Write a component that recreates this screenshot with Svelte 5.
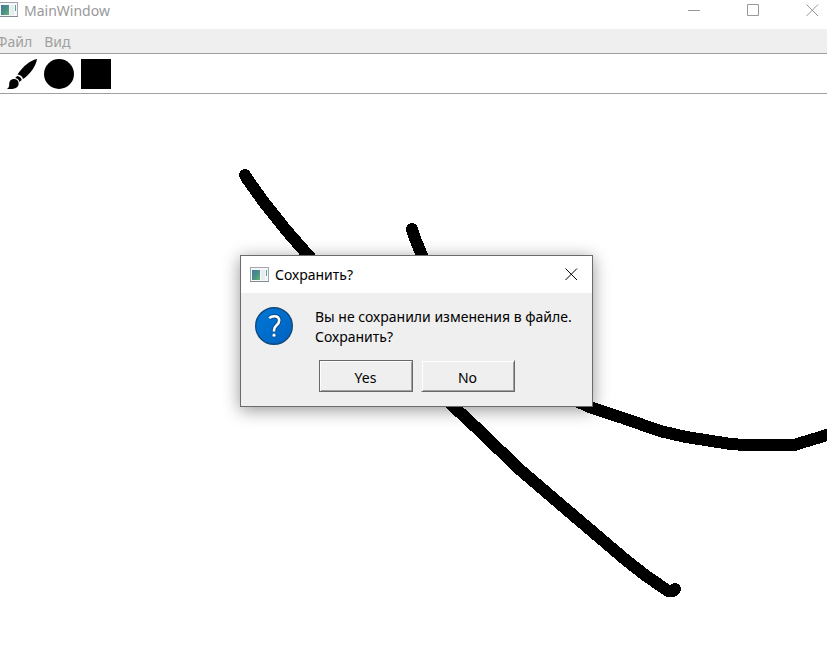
<script>
  let open = $state(true);
  const menus = ['Файл', 'Вид'];
  const strokes = [
    'M245 81 L248 86 L263 107 L286 136 L314 168 L362 225 L410 271 L453 312 L482 339 L518 374 L560 410 L627 467 L645 481 L668 497 H673 L675 495',
    'M412 135 L416 147 L424 166 L450 220 L510 275 L583 310 L592 314 L623 324 L660 337 L686 343 L731 350 L745 351 H794 L827 341 L860 331'
  ];
</script>

{#snippet appIcon()}
  <svg class="app-icon" viewBox="0 0 19 16" aria-hidden="true">
    <defs>
      <linearGradient id="pane" x1="0" y1="0" x2="1" y2="1">
        <stop offset="0" stop-color="#4676a0" />
        <stop offset=".55" stop-color="#4a9185" />
        <stop offset="1" stop-color="#62b56a" />
      </linearGradient>
    </defs>
    <rect x=".5" y=".5" width="18" height="14" fill="#f5f7f9" stroke="#a3a8b0" />
    <path d="M0 14.5H19" stroke="#858b93" />
    <rect x="2" y="3" width="8" height="10" fill="url(#pane)" />
    <rect x="11" y="3" width="4" height="10" fill="#e6ecf1" />
    <path d="M16.5 3V9" stroke="#5aa58b" />
  </svg>
{/snippet}

<div class="window">
  <header class="titlebar">
    {@render appIcon()}
    <h1>MainWindow</h1>
    <div class="controls">
      <button aria-label="Minimize"><svg viewBox="0 0 13 13"><path d="M0 6.5H12" /></svg></button>
      <button aria-label="Maximize"><svg viewBox="0 0 13 13"><path d="M.5 .5H11.5V11.5H.5Z" /></svg></button>
      <button aria-label="Close"><svg viewBox="0 0 13 13"><path d="M.5 .5L12 12M12 .5L.5 12" /></svg></button>
    </div>
  </header>

  <nav class="menubar">
    {#each menus as menu}
      <button>{menu}</button>
    {/each}
  </nav>

  <div class="toolbar">
    <button aria-label="Brush">
      <svg viewBox="0 0 30 30">
        <path d="M30 0C24 1 16 7 10.500 15.500C13.500 16 15.500 17.500 16 20C23 15.500 29 7 30 0Z" />
        <path d="M10.200 17L8.200 18.900C10.400 19.300 12 20.800 12.400 22.900L14.700 20.900C14.100 18.600 12.700 17.300 10.200 17Z" />
        <path d="M7.600 20C4 20 2 22.200 2.200 25.400C2.300 27.700 1.700 29 0 29.700C4.600 30.600 9.600 30 11.200 26.800C12.400 23.900 11.200 20.400 7.600 20Z" />
      </svg>
    </button>
    <button aria-label="Ellipse"><svg viewBox="0 0 30 30"><circle cx="15" cy="15" r="15" /></svg></button>
    <button aria-label="Rectangle"><svg viewBox="0 0 30 30"><rect width="30" height="30" /></svg></button>
  </div>

  <main>
    <svg class="drawing" aria-label="Drawing">
      {#each strokes as d}
        <path {d} />
      {/each}
    </svg>
  </main>

  {#if open}
    <div class="dialog" role="dialog" aria-labelledby="dialog-title" aria-describedby="dialog-text">
      <div class="dialog-title">
        {@render appIcon()}
        <h2 id="dialog-title">Сохранить?</h2>
        <button aria-label="Close" onclick={() => (open = false)}>
          <svg viewBox="0 0 13 13"><path d="M.5 .5L12 12M12 .5L.5 12" /></svg>
        </button>
      </div>
      <div class="dialog-body">
        <div class="message">
          <svg class="question" viewBox="0 0 38 38" aria-hidden="true">
            <defs>
              <linearGradient id="disc" x1="0" y1="0" x2="1" y2="1">
                <stop offset="0" stop-color="#0078d7" />
                <stop offset="1" stop-color="#0062c0" />
              </linearGradient>
            </defs>
            <circle cx="19" cy="19" r="18.300" fill="url(#disc)" stroke="#12497c" stroke-width="1.400" />
            <g fill="none" stroke-linejoin="round">
              <path d="M14.200 11.200C15.500 9.900 17.200 9.200 19.300 9.200C22.400 9.200 24.200 10.900 24.200 13.600C24.200 15.800 23.200 17 21.400 18.500C19.700 20 19 21 19 23.200V24.400" stroke="#0a4b8c" stroke-width="4.400" />
              <path d="M14.200 11.200C15.500 9.900 17.200 9.200 19.300 9.200C22.400 9.200 24.200 10.900 24.200 13.600C24.200 15.800 23.200 17 21.400 18.500C19.700 20 19 21 19 23.200V24.400" stroke="#fff" stroke-width="2.600" />
            </g>
            <circle cx="19" cy="28.200" r="1.900" fill="#fff" stroke="#0a4b8c" stroke-width=".6" />
          </svg>
          <p id="dialog-text">Вы не сохранили изменения в файле.<br />Сохранить?</p>
        </div>
        <div class="actions">
          <button class="default" onclick={() => (open = false)}>Yes</button>
          <button onclick={() => (open = false)}>No</button>
        </div>
      </div>
    </div>
  {/if}
</div>

<style>
  :global(body) {
    margin: 0;
  }
  .window {
    position: relative;
    display: flex;
    flex-direction: column;
    min-height: 100vh;
    overflow: hidden;
    background: #fff;
    color: #000;
    font: 14px/20px 'Noto Sans', 'Open Sans', sans-serif;
  }
  .window * {
    box-sizing: border-box;
  }
  button {
    padding: 0;
    border: 0;
    background: none;
    color: inherit;
    font: inherit;
  }
  svg {
    display: block;
    flex: none;
  }
  h1,
  h2,
  p {
    margin: 0;
    font: inherit;
    white-space: nowrap;
  }
  .app-icon {
    width: 19px;
    height: 16px;
  }
  .titlebar {
    display: flex;
    align-items: flex-start;
    height: 29px;
    padding-top: 1px;
    color: #999;
  }
  .titlebar .app-icon {
    margin: 1px 6px 0 -1px;
  }
  .controls {
    display: flex;
    gap: 46px;
    margin: 3px 8px 0 auto;
  }
  .controls svg,
  .dialog-title button svg {
    width: 13px;
    height: 13px;
    fill: none;
    stroke: currentColor;
  }
  .menubar {
    display: flex;
    gap: 12px;
    height: 25px;
    padding-top: 3px;
    margin-left: -4px;
    background: #efefef;
    border-bottom: 1px solid #a0a0a0;
    color: #a0a0a0;
  }
  .menubar button {
    height: 20px;
  }
  .toolbar {
    display: flex;
    align-items: center;
    gap: 7px;
    height: 40px;
    padding-left: 7px;
    border-bottom: 1px solid #a0a0a0;
  }
  .toolbar svg {
    width: 30px;
    height: 30px;
  }
  main {
    display: flex;
    flex: 1;
  }
  .drawing {
    width: 100%;
    min-height: 560px;
    fill: none;
    stroke: #000;
    stroke-width: 12px;
    stroke-linecap: round;
    stroke-linejoin: round;
    shape-rendering: crispEdges;
  }
  .dialog {
    position: absolute;
    top: 255px;
    left: 240px;
    min-width: 353px;
    background: #efefef;
    border: 1px solid #6b6b6b;
    box-shadow: 0 3px 16px rgb(0 0 0 / 42%);
  }
  .dialog-title {
    display: flex;
    align-items: center;
    gap: 6px;
    height: 37px;
    padding: 0 14px 0 9px;
    background: #fff;
  }
  .dialog-title button {
    margin-left: auto;
  }
  .dialog-body {
    padding: 14px;
  }
  .message {
    display: flex;
    gap: 22px;
  }
  .question {
    width: 38px;
    height: 38px;
  }
  .actions {
    display: flex;
    justify-content: center;
    gap: 8px;
    margin-top: 13px;
  }
  .actions button {
    width: 94px;
    height: 32px;
    padding-top: 4px;
    border: 1px solid transparent;
    border-right-color: #696969;
    border-bottom-color: #696969;
    box-shadow:
      inset 1px 1px #fff,
      inset -1px -1px #a0a0a0;
  }
  .actions .default {
    border-color: #696969;
  }
</style>
